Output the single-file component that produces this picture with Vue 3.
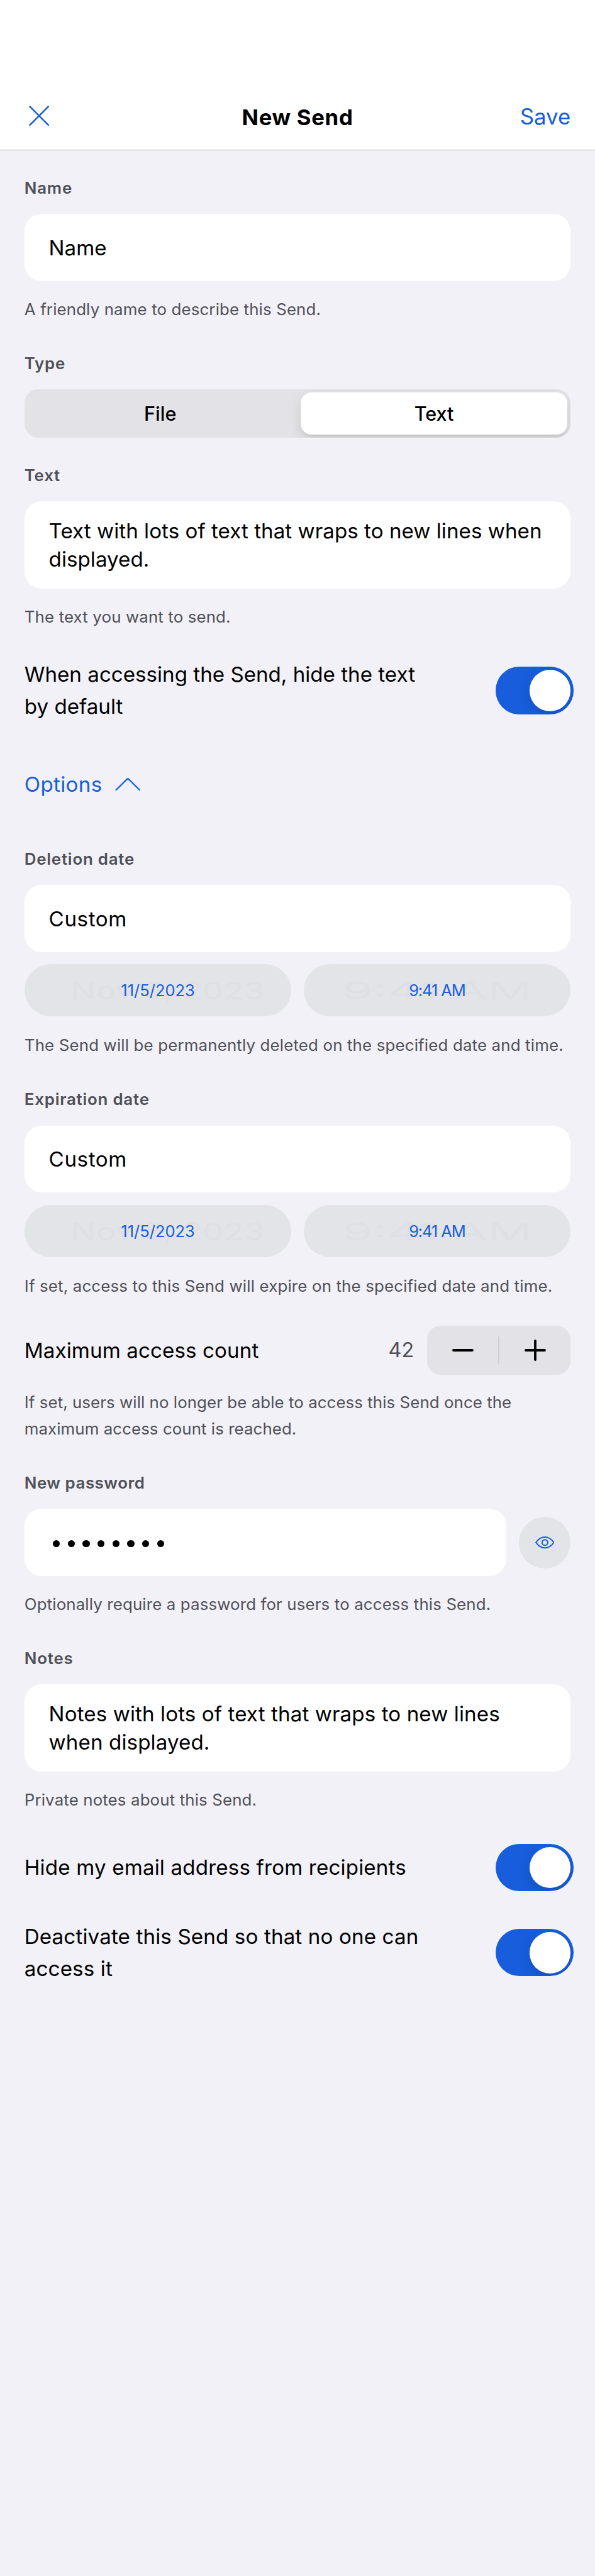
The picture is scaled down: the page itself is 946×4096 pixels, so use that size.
<script setup>
import { ref } from 'vue'

const sendType = ref('Text')
const sendTypes = ['File', 'Text']
const hideText = ref(true)
const hideEmail = ref(true)
const deactivated = ref(true)
const accessCount = ref(42)
const passwordLength = 8

const dateFields = [
  {
    label: 'Deletion date',
    value: 'Custom',
    help: 'The Send will be permanently deleted on the specified date and time.',
  },
  {
    label: 'Expiration date',
    value: 'Custom',
    help: 'If set, access to this Send will expire on the specified date and time.',
  },
]
</script>

<template>
  <div class="screen">
    <header class="nav">
      <button class="close" aria-label="Close">
        <svg viewBox="0 0 40 40"><path d="M1.8 1.8 38.2 38.2M38.2 1.8 1.8 38.2" /></svg>
      </button>
      <h1 class="title">New Send</h1>
      <button class="save">Save</button>
    </header>

    <main class="form">
      <section class="field">
        <label class="label">Name</label>
        <div class="box">Name</div>
        <p class="help">A friendly name to describe this Send.</p>
      </section>

      <section class="field type-field">
        <label class="label">Type</label>
        <div class="segments">
          <button
            v-for="t in sendTypes"
            :key="t"
            class="segment"
            :class="{ active: t === sendType }"
            @click="sendType = t"
          >{{ t }}</button>
        </div>
      </section>

      <section class="field text-field">
        <label class="label">Text</label>
        <div class="box multi">Text with lots of text that wraps to new lines when<br />displayed.</div>
        <p class="help">The text you want to send.</p>
      </section>

      <div class="row hide-text">
        <span>When accessing the Send, hide the text<br />by default</span>
        <button class="toggle" :class="{ on: hideText }" @click="hideText = !hideText"><i class="knob"></i></button>
      </div>

      <button class="options">
        <span>Options</span>
        <svg viewBox="0 0 50 26"><path d="M2 23.5 22.6 3.1Q25 .9 27.4 3.1L48 23.5" /></svg>
      </button>

      <section v-for="f in dateFields" :key="f.label" class="field date-field">
        <label class="label">{{ f.label }}</label>
        <div class="box loose">{{ f.value }}</div>
        <div class="pills">
          <div class="pill"><span class="ghost date">Nov 5, 2023</span><span class="picked">11/5/2023</span></div>
          <div class="pill"><span class="ghost time">9:41 AM</span><span class="picked tight">9:41 AM</span></div>
        </div>
        <p class="help">{{ f.help }}</p>
      </section>

      <section class="count">
        <div class="row">
          <span>Maximum access count</span>
          <span class="amount">{{ accessCount }}</span>
          <div class="stepper">
            <button aria-label="Decrement" @click="accessCount--">
              <svg viewBox="0 0 42 42"><path d="M2.4 21H39.6" /></svg>
            </button>
            <i class="divider"></i>
            <button aria-label="Increment" @click="accessCount++">
              <svg viewBox="0 0 42 42"><path d="M2.4 21H39.6M21 2.4V39.6" /></svg>
            </button>
          </div>
        </div>
        <p class="help count-help">If set, users will no longer be able to access this Send once the<br />maximum access count is reached.</p>
      </section>

      <section class="field">
        <label class="label password-label">New password</label>
        <div class="password">
          <div class="box dots"><i v-for="n in passwordLength" :key="n" class="dot"></i></div>
          <button class="eye" aria-label="Show password">
            <svg viewBox="0 0 38 24">
              <path d="M1.4 12C6 5.5 12 1.3 19 1.3S32 5.5 36.6 12C32 18.5 26 22.7 19 22.7S6 18.5 1.4 12Z" />
              <circle cx="19" cy="12" r="5.5" />
            </svg>
          </button>
        </div>
        <p class="help">Optionally require a password for users to access this Send.</p>
      </section>

      <section class="field notes-field">
        <label class="label">Notes</label>
        <div class="box multi">Notes with lots of text that wraps to new lines<br />when displayed.</div>
        <p class="help">Private notes about this Send.</p>
      </section>

      <div class="row hide-email">
        <span>Hide my email address from recipients</span>
        <button class="toggle" :class="{ on: hideEmail }" @click="hideEmail = !hideEmail"><i class="knob"></i></button>
      </div>
      <div class="row deactivate">
        <span>Deactivate this Send so that no one can<br />access it</span>
        <button class="toggle" :class="{ on: deactivated }" @click="deactivated = !deactivated"><i class="knob"></i></button>
      </div>
    </main>
  </div>
</template>

<style>
/* 1rem = 100 design pixels on the 1170-wide canvas */
html { font-size: 80.855px; }
body { margin: 0; background: #f2f1f7; }
</style>

<style scoped>
.screen {
  box-sizing: border-box;
  width: 11.7rem;
  height: 4096px;
  background: #f2f1f7;
  color: #000;
  font-family: Inter, "Liberation Sans", sans-serif;
  font-size: .41rem;
  letter-spacing: .001em;
  white-space: nowrap;
  overflow: hidden;
}
button {
  border: 0; padding: 0; margin: 0; background: none;
  font: inherit; color: inherit; letter-spacing: inherit;
}
svg { display: block; fill: none; stroke-linecap: round; stroke-linejoin: round; }
p, h1 { margin: 0; }

.nav {
  box-sizing: border-box;
  height: 2.95rem;
  padding: 1.63rem .48rem 0 .57rem;
  background: #fff;
  border-bottom: 1px solid #acabb0;
  display: grid;
  grid-template-columns: 2rem 1fr 2rem;
  align-items: center;
}
.nav .title { margin-left: -.09rem; }
.close svg { width: .4rem; height: .4rem; stroke: #175ddc; stroke-width: 3.1; }
.title { padding-top: .04rem; font-size: .43rem; font-weight: 700; line-height: .52rem; letter-spacing: .02em; text-align: center; }
.save { justify-self: end; font-size: .43rem; line-height: .52rem; letter-spacing: 0; color: #175ddc; }

.form { padding: .53rem .48rem 0; display: flex; flex-direction: column; }
.field { display: flex; flex-direction: column; margin-top: .588rem; }
.field:first-child { margin-top: 0; }
.label { padding-top: .01rem; font-size: .32rem; line-height: .42rem; font-weight: 600; letter-spacing: .03em; color: #4f5058; margin-bottom: .3rem; }
.password-label { letter-spacing: .02em; }
.box {
  box-sizing: border-box;
  height: 1.32rem;
  padding: .01rem .48rem 0;
  border-radius: .34rem;
  background: #fff;
  line-height: 1.32rem;
}
.box.multi { height: 1.727rem; padding-top: .315rem; line-height: .55rem; letter-spacing: .001em; }
.notes-field .box.multi { letter-spacing: .003em; }
.loose { letter-spacing: .018em; }
.help { margin-top: .29rem; margin-bottom: -.005rem; font-size: .32rem; line-height: .52rem; letter-spacing: .005em; color: #4f5058; }
.help.count-help { letter-spacing: .0025em; }

.segments {
  box-sizing: border-box;
  display: grid;
  grid-template-columns: 5.22fr 5.25fr;
  gap: .15rem;
  height: .96rem;
  padding: .06rem;
  border-radius: .27rem;
  background: #e3e2e7;
  overflow: hidden;
}
.segment { font-size: .378rem; font-weight: 500; letter-spacing: 0; border-radius: .21rem; }
.segment.active { background: #fff; box-shadow: 0 .09rem .24rem rgba(0, 0, 0, .12), 0 .03rem .03rem rgba(0, 0, 0, .04); }
.text-field { margin-top: .514rem; }

.row { display: flex; align-items: center; justify-content: space-between; line-height: .63rem; }
.hide-text { margin-top: .563rem; letter-spacing: 0; }
.hide-email { margin-top: .61rem; letter-spacing: .005em; }
.deactivate { margin-top: .58rem; letter-spacing: .004em; }
.toggle {
  box-sizing: border-box;
  flex: none;
  width: 1.53rem; height: .93rem;
  margin-right: -.06rem;
  padding: .06rem;
  border-radius: .465rem;
  background: #d5d5da;
  display: flex;
  overflow: hidden;
}
.toggle.on { background: #175ddc; justify-content: flex-end; }
.knob { width: .81rem; height: .81rem; border-radius: 50%; background: #fff; box-shadow: 0 .09rem .24rem rgba(0, 0, 0, .12); }

.options { margin-top: .903rem; display: flex; align-items: center; line-height: .63rem; letter-spacing: .01em; color: #175ddc; }
.options svg { width: .5rem; height: .26rem; margin-left: .25rem; stroke: #175ddc; stroke-width: 3; }
.options + .date-field { margin-top: .93rem; }

.pills { display: grid; grid-template-columns: 1fr 1fr; gap: .24rem; margin-top: .24rem; }
.pill {
  position: relative;
  height: 1.027rem;
  border-radius: .5135rem;
  background: #e2e4e8;
  display: flex; align-items: center; justify-content: center;
}
.date-field .help { margin-top: .312rem; letter-spacing: .006em; }
.picked { position: relative; font-size: .315rem; letter-spacing: 0; color: #175ddc; }
.picked.tight { letter-spacing: -.042em; }
.ghost { position: absolute; left: 0; right: 0; text-align: center; font-size: .48rem; letter-spacing: 0; color: #dfe0e5; }
.ghost.date { transform: translateX(.19rem) scaleX(1.37); }
.ghost.time { transform: scaleX(2.047); }

.count { margin-top: .526rem; }
.count .row { letter-spacing: .003em; }
.row .amount { margin-left: auto; margin-right: .26rem; font-size: .4rem; color: #4f5058; letter-spacing: 0; }
.stepper { display: flex; align-items: center; width: 2.82rem; height: .96rem; border-radius: .27rem; background: #e3e2e7; }
.stepper button { flex: 1; display: flex; justify-content: center; }
.stepper svg { width: .42rem; height: .42rem; stroke: #000; stroke-width: 4.7; }
.divider { width: .03rem; height: .54rem; border-radius: .015rem; background: #cfced4; }

.password { display: flex; align-items: center; gap: .24rem; }
.password .box { flex: 1; }
.dots { display: flex; align-items: center; gap: .153rem; padding-left: .56rem; padding-top: .05rem; }
.dot { width: .14rem; height: .14rem; border-radius: 50%; background: #000; }
.eye { width: 1.02rem; height: 1.02rem; border-radius: 50%; background: #e2e4e8; display: flex; align-items: center; justify-content: center; }
.eye svg { width: .38rem; height: .24rem; stroke: #175ddc; stroke-width: 2.5; }
</style>
